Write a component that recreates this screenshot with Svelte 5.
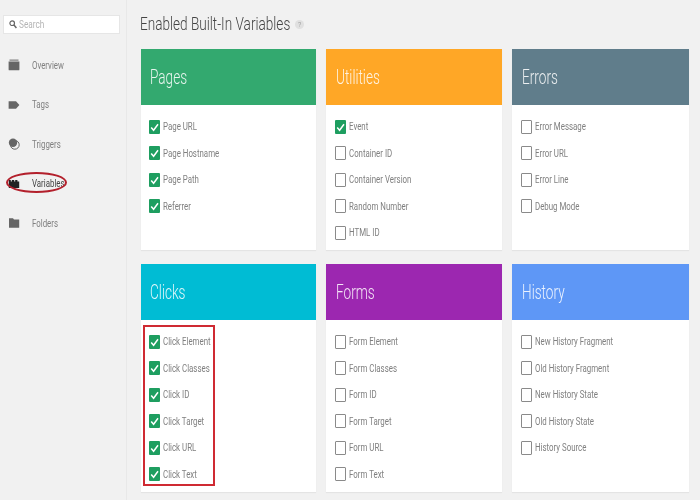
<script>
    const nav = [
        { label: "Overview", icon: "overview" },
        { label: "Tags", icon: "tags" },
        { label: "Triggers", icon: "triggers" },
        { label: "Variables", icon: "variables", active: true },
        { label: "Folders", icon: "folders" },
    ];

    const groups = [
        { title: "Pages", color: "#33a96f", items: [["Page URL", 1], ["Page Hostname", 1], ["Page Path", 1], ["Referrer", 1]] },
        { title: "Utilities", color: "#ffa726", items: [["Event", 1], ["Container ID"], ["Container Version"], ["Random Number"], ["HTML ID"]] },
        { title: "Errors", color: "#607d8b", items: [["Error Message"], ["Error URL"], ["Error Line"], ["Debug Mode"]] },
        { title: "Clicks", color: "#00bcd4", marked: true, items: [["Click Element", 1], ["Click Classes", 1], ["Click ID", 1], ["Click Target", 1], ["Click URL", 1], ["Click Text", 1]] },
        { title: "Forms", color: "#9c27b0", items: [["Form Element"], ["Form Classes"], ["Form ID"], ["Form Target"], ["Form URL"], ["Form Text"]] },
        { title: "History", color: "#5e97f6", items: [["New History Fragment"], ["Old History Fragment"], ["New History State"], ["Old History State"], ["History Source"]] },
    ];
</script>

<div class="page">
    <aside class="sidebar">
        <div class="search">
            <svg width="8" height="9" viewBox="0 0 8 9">
                <circle cx="3.2" cy="3.2" r="2.3" fill="none" stroke="#666" stroke-width="1.2" />
                <path d="M5 5l2.4 3" stroke="#666" stroke-width="1.4" />
            </svg>
            <span class="squeeze">Search</span>
        </div>
        <nav>
            {#each nav as item}
                <div class="nav-item" class:active={item.active}>
                    <svg class="nav-icon" width="12" height="12" viewBox="0 0 12 12">
                        {#if item.icon === "overview"}
                            <path d="M1.5 .6h9v1h-9z" fill="#666" />
                            <path d="M.6 2.4h10.8v8q0 .9-.9.9h-9q-.9 0-.9-.9z" fill="#666" />
                        {:else if item.icon === "tags"}
                            <path d="M.6 2.2h7.4l3.4 3.8-3.4 3.8H.6z" fill="#666" />
                        {:else if item.icon === "triggers"}
                            <circle cx="5" cy="4.8" r="4.2" fill="#666" />
                            <circle cx="6.8" cy="6.8" r="4.4" fill="none" stroke="#666" stroke-width="1" />
                        {:else if item.icon === "variables"}
                            <path d="M.8 3.5V2h2v1.5h1V2h2.4v1.5h1V2h2.2v1.5h1.8V10H.8z" fill="#222" />
                        {:else}
                            <path d="M1 1.2h4l1 1.3h5.2v8.3H1z" fill="#666" />
                        {/if}
                    </svg>
                    <span class="squeeze">{item.label}</span>
                </div>
            {/each}
        </nav>
        <div class="ring"></div>
    </aside>

    <main class="content">
        <h1>
            <span class="squeeze">Enabled Built-In Variables</span>
            <i class="help">?</i>
        </h1>
        <div class="grid">
            {#each groups as group}
                <section class="card">
                    <header style="background: {group.color}">
                        <span class="squeeze">{group.title}</span>
                    </header>
                    <ul>
                        {#each group.items as [label, checked]}
                            <li>
                                <span class="box" class:checked>
                                    {#if checked}
                                        <svg width="11" height="14" viewBox="0 0 11 14">
                                            <path d="M2.2 7.4l2.4 2.8 4.4-6" fill="none" stroke="#fff" stroke-width="1.5" />
                                        </svg>
                                    {/if}
                                </span>
                                <span class="squeeze">{label}</span>
                            </li>
                        {/each}
                    </ul>
                    {#if group.marked}
                        <div class="mark"></div>
                    {/if}
                </section>
            {/each}
        </div>
    </main>
</div>

<style>
    :global(body) {
        margin: 0;
        background: #f1f1f1;
    }

    .page {
        display: flex;
        width: 700px;
        height: 500px;
        overflow: hidden;
        font-family: Roboto, "Liberation Sans", sans-serif;
        color: #808080;
        filter: blur(0.35px);
    }

    .squeeze {
        display: inline-block;
        transform: scaleX(0.75);
        transform-origin: left center;
        white-space: nowrap;
    }

    .sidebar {
        position: relative;
        flex: none;
        box-sizing: border-box;
        width: 127px;
        padding: 15px 6px 0 3px;
        border-right: 1px solid #e8e8e8;
    }

    .search {
        display: flex;
        align-items: center;
        gap: 2px;
        box-sizing: border-box;
        height: 19px;
        padding-left: 5px;
        background: #fff;
        border: 1px solid #e6e6e6;
        font-size: 11px;
        color: #b5b5b5;
    }

    nav {
        margin-top: 11.5px;
    }

    .nav-item {
        display: flex;
        align-items: center;
        height: 39.5px;
        padding-left: 5px;
        font-size: 10.5px;
    }

    .nav-item.active {
        color: #444;
    }

    .nav-icon {
        flex: none;
        margin-right: 12px;
    }

    .ring {
        position: absolute;
        left: 6px;
        top: 172px;
        width: 61px;
        height: 21px;
        box-sizing: border-box;
        border: 2px solid #b3202c;
        border-radius: 50%;
    }

    .content {
        flex: 1;
        padding: 0 11px 0 13.5px;
    }

    h1 {
        display: flex;
        align-items: center;
        height: 47px;
        margin: 0 0 2px;
        font-size: 19px;
        font-weight: 300;
        color: #444;
    }

    h1 .squeeze {
        transform: scaleX(0.715);
        margin-right: -55px;
        margin-left: -0.5px;
    }

    .help {
        display: flex;
        align-items: center;
        justify-content: center;
        width: 9px;
        height: 9px;
        margin-top: 2px;
        border-radius: 50%;
        background: #e0e0e0;
        font-size: 7px;
        font-style: normal;
        color: #888;
    }

    .grid {
        display: grid;
        grid-template-columns: 175.5px 176px 177px;
        grid-template-rows: 201px 228px;
        gap: 14px 10px;
    }

    .card {
        position: relative;
        background: #fff;
        box-shadow: 0 1px 1px rgba(0, 0, 0, 0.05);
    }

    header {
        display: flex;
        align-items: center;
        box-sizing: border-box;
        height: 56px;
        padding-left: 9.5px;
        font-size: 20px;
        font-weight: 300;
        color: rgba(255, 255, 255, 0.88);
    }

    header .squeeze {
        transform: scaleX(0.68);
    }

    ul {
        margin: 0;
        padding: 8.7px 0 0 8.7px;
        list-style: none;
    }

    li {
        display: flex;
        align-items: center;
        height: 26.5px;
        font-size: 10.5px;
    }

    .box {
        flex: none;
        box-sizing: border-box;
        width: 11px;
        height: 14px;
        margin-right: 3px;
        border: 1.5px solid #8a8a8a;
        border-radius: 1px;
    }

    .box.checked {
        border: none;
        background: #1e9e60;
    }

    .box svg {
        display: block;
    }

    .mark {
        position: absolute;
        left: 2.5px;
        top: 61px;
        width: 72px;
        height: 161px;
        box-sizing: border-box;
        border: 2px solid #cf2a32;
    }
</style>
